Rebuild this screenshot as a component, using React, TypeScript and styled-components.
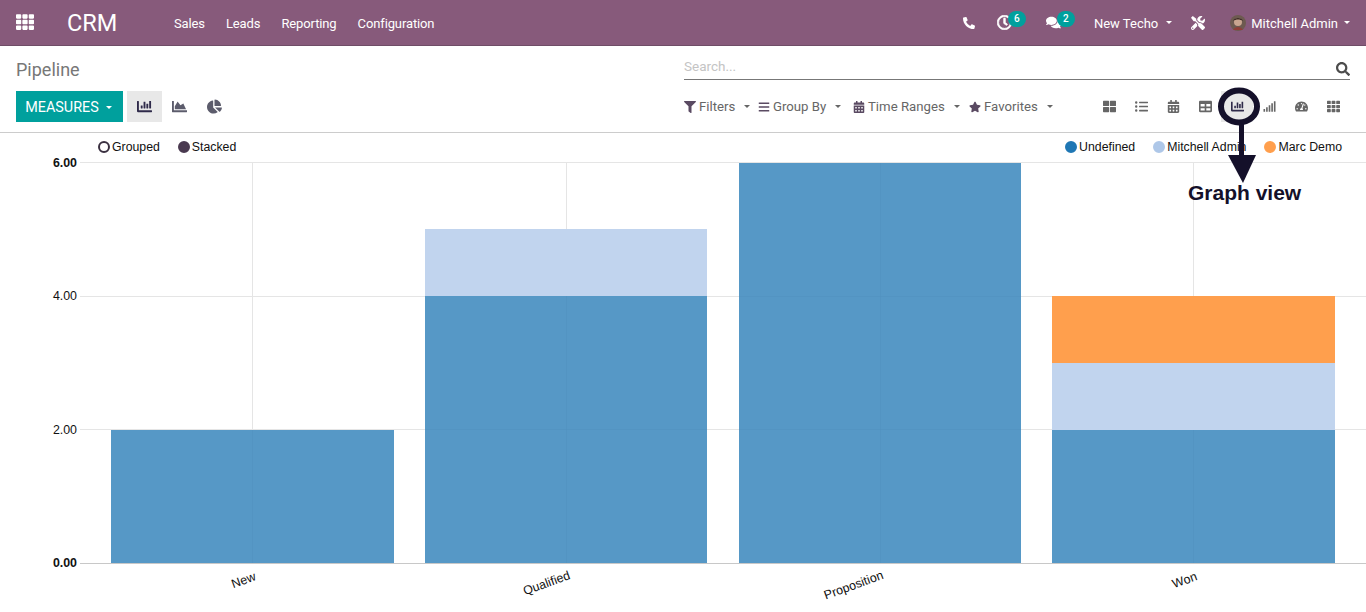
import React from "react";
import styled, { createGlobalStyle } from "styled-components";
import {
  FaTh, FaPhoneAlt, FaRegClock, FaComments, FaTools, FaSearch, FaFilter, FaBars,
  FaCalendarAlt, FaStar, FaChartBar, FaChartArea, FaChartPie, FaThLarge, FaListUl,
  FaTable, FaSignal, FaTachometerAlt,
} from "react-icons/fa";

const Global = createGlobalStyle`
  html, body { margin: 0; padding: 0; background: #fff; }
  body { font-family: Roboto, "Liberation Sans", sans-serif; }
  * { box-sizing: border-box; }
`;

const Page = styled.div`
  width: 1366px;
  height: 612px;
  overflow: hidden;
  position: relative;
  display: flex;
  flex-direction: column;
`;

const Nav = styled.header`
  height: 46px;
  flex: none;
  background: #875a7b;
  border-bottom: 1px solid #6f4d67;
  display: flex;
  align-items: center;
  color: #fff;
  font-size: 13px;
`;
const AppsIcon = styled.span`
  display: flex;
  margin-left: 16px;
  margin-top: -2px;
  font-size: 18px;
`;
const Brand = styled.span`
  margin-left: 33px;
  font-size: 23.5px;
  width: 107px;
`;
const Menu = styled.nav`
  display: flex;
  gap: 21px;
  padding-top: 1px;
  letter-spacing: -0.12px;
`;
const Spacer = styled.div`
  flex: 1;
`;
const NavTools = styled.div`
  display: flex;
  align-items: center;
  padding-right: 16px;
`;
const NavIcon = styled.span<{ $size: number; $left: number; $bold?: boolean }>`
  position: relative;
  display: flex;
  font-size: ${(p) => p.$size}px;
  margin-left: ${(p) => p.$left}px;
  svg path { stroke: ${(p) => (p.$bold ? "currentColor" : "none")}; stroke-width: ${(p) => (p.$bold ? 24 : 0)}; }
`;
const Badge = styled.span`
  position: absolute;
  left: 11px;
  top: -4px;
  width: 18px;
  height: 16px;
  border-radius: 8px;
  background: #00a09d;
  color: #fff;
  font-size: 10px;
  font-weight: 500;
  line-height: 15px;
  text-align: center;
`;
const NavText = styled.span<{ $left: number }>`
  margin-left: ${(p) => p.$left}px;
  padding-top: 1px;
  white-space: nowrap;
`;
const Caret = styled.i<{ $left: number }>`
  display: inline-block;
  flex: none;
  margin-left: ${(p) => p.$left}px;
  border-left: 3.5px solid transparent;
  border-right: 3.5px solid transparent;
  border-top: 3.5px solid currentColor;
`;

const Panel = styled.section`
  height: 87px;
  flex: none;
  border-bottom: 1px solid #ccc;
  display: grid;
  grid-template-columns: 668px 1fr;
  grid-template-rows: 45px 31px;
  padding: 0 16px;
`;
const Title = styled.h1`
  margin: 0;
  font-size: 18px;
  font-weight: 400;
  color: #777;
  line-height: 47px;
`;
const SearchBar = styled.div`
  height: 34px;
  align-self: start;
  border-bottom: 1px solid #777;
  display: flex;
  align-items: center;
  justify-content: space-between;
  font-size: 13.5px;
  color: #c4c4c4;
  padding-top: 8px;
`;
const SearchHint = styled.span`
  margin-bottom: 2px;
`;
const SearchIcon = styled.span`
  display: flex;
  color: #4c4c4c;
  font-size: 14px;
  margin-top: 5px;
`;
const LeftTools = styled.div`
  display: flex;
  align-items: stretch;
`;
const Measures = styled.button`
  width: 107px;
  border: 0;
  background: #00a09d;
  color: #fff;
  font: 400 14.4px Roboto, sans-serif;
  padding: 1px 2px 0 0;
  margin-right: 4px;
  display: flex;
  align-items: center;
  justify-content: center;
`;
const ModeButton = styled.span<{ $active?: boolean }>`
  width: 35px;
  display: flex;
  align-items: center;
  justify-content: center;
  font-size: 15px;
  color: ${(p) => (p.$active ? "#2f2a4a" : "#5c5c6c")};
  background: ${(p) => (p.$active ? "#e8e8e8" : "transparent")};
`;
const RightTools = styled.div`
  display: flex;
  align-items: center;
  justify-content: space-between;
`;
const Filters = styled.div`
  display: flex;
  align-items: center;
  color: #666;
  font-size: 13.2px;
`;
const FilterItem = styled.span<{ $width: number }>`
  display: flex;
  align-items: center;
  width: ${(p) => p.$width}px;
  gap: 3px;
  white-space: nowrap;
  svg { flex: none; color: #5a4a62; font-size: 12px; }
`;
const Views = styled.div`
  display: flex;
  align-items: stretch;
  height: 31px;
  margin-right: 1px;
`;
const ViewButton = styled.span<{ $active?: boolean }>`
  width: 32px;
  display: flex;
  align-items: center;
  justify-content: center;
  font-size: 13px;
  color: ${(p) => (p.$active ? "#2f2a4a" : "#666")};
  background: ${(p) => (p.$active ? "#e8e8e8" : "transparent")};
`;

const ChartArea = styled.main`
  flex: 1;
  min-height: 0;
  display: flex;
  flex-direction: column;
`;
const Legends = styled.div`
  height: 29px;
  flex: none;
  display: flex;
  align-items: center;
  justify-content: space-between;
  padding: 0 24px 2px 98px;
  font: 12.3px "Liberation Sans", Arial, sans-serif;
  color: #111;
`;
const LegendGroup = styled.div`
  display: flex;
  align-items: center;
  gap: 18px;
`;
const LegendItem = styled.span`
  display: flex;
  align-items: center;
  gap: 2px;
  white-space: nowrap;
`;
const Dot = styled.i<{ $fill: string; $ring?: string }>`
  width: 12px;
  height: 12px;
  flex: none;
  border-radius: 50%;
  background: ${(p) => p.$fill};
  border: 2px solid ${(p) => p.$ring ?? p.$fill};
`;
const ChartSvg = styled.svg`
  display: block;
  overflow: visible;
  font-family: "Liberation Sans", Arial, sans-serif;
`;

const CalloutMark = styled.svg`
  position: absolute;
  left: 1210px;
  top: 82px;
`;
const CalloutLabel = styled.div`
  position: absolute;
  left: 1188px;
  top: 181px;
  font: 700 21px "Liberation Sans", Arial, sans-serif;
  line-height: 24px;
  color: #14102a;
  white-space: nowrap;
`;

const BLUE = "#5698c6";
const LIGHT = "#c1d4ee";
const ORANGE = "#ff9f4d";
const y = (v: number) => 401 - v * 66.75;
const py = (v: number) => Math.round(y(v));

const stages = [
  { name: "New", x: 111, w: 283, cx: 252, lx: 245, ly: 422, parts: [[0, 2, BLUE]] },
  { name: "Qualified", x: 425, w: 282, cx: 566, lx: 548, ly: 425, parts: [[0, 4, BLUE], [4, 5, LIGHT]] },
  { name: "Proposition", x: 739, w: 282, cx: 880, lx: 855, ly: 427, parts: [[0, 6, BLUE]] },
  { name: "Won", x: 1052, w: 283, cx: 1193, lx: 1186, ly: 422, parts: [[0, 2, BLUE], [2, 3, LIGHT], [3, 4, ORANGE]] },
] as { name: string; x: number; w: number; cx: number; lx: number; ly: number; parts: [number, number, string][] }[];

const modes = [FaChartBar, FaChartArea, FaChartPie];
const views = [FaThLarge, FaListUl, FaCalendarAlt, FaTable, FaChartBar, FaSignal, FaTachometerAlt, FaTh];
const filters = [
  { Icon: FaFilter, label: "Filters", width: 74 },
  { Icon: FaBars, label: "Group By", width: 95 },
  { Icon: FaCalendarAlt, label: "Time Ranges", width: 116 },
  { Icon: FaStar, label: "Favorites", width: 96 },
];

const Avatar = () => (
  <svg width="16" height="16" viewBox="0 0 16 16">
    <circle cx="8" cy="8" r="8" fill="#6d5a50" />
    <circle cx="8" cy="7" r="4" fill="#c9a58f" />
    <path d="M3 6c1-4 9-4 10 0-3-2-7-2-10 0z" fill="#3a2a26" />
    <path d="M3 15c2-4 8-4 10 0z" fill="#8f3f38" />
  </svg>
);

export default function App() {
  return (
    <Page>
      <Global />
      <Nav>
        <AppsIcon><FaTh /></AppsIcon>
        <Brand>CRM</Brand>
        <Menu>
          <span>Sales</span>
          <span>Leads</span>
          <span>Reporting</span>
          <span>Configuration</span>
        </Menu>
        <Spacer />
        <NavTools>
          <NavIcon $size={12} $left={0}><FaPhoneAlt /></NavIcon>
          <NavIcon $size={15} $left={22} $bold><FaRegClock /><Badge>6</Badge></NavIcon>
          <NavIcon $size={15} $left={34}><FaComments /><Badge>2</Badge></NavIcon>
          <NavText $left={33}>New Techo</NavText>
          <Caret $left={8} />
          <NavIcon $size={14} $left={19}><FaTools /></NavIcon>
          <NavIcon $size={16} $left={25}><Avatar /></NavIcon>
          <NavText $left={5}>Mitchell Admin</NavText>
          <Caret $left={6} />
        </NavTools>
      </Nav>

      <Panel>
        <Title>Pipeline</Title>
        <SearchBar>
          <SearchHint>Search...</SearchHint>
          <SearchIcon><FaSearch /></SearchIcon>
        </SearchBar>
        <LeftTools>
          <Measures>MEASURES<Caret $left={7} /></Measures>
          {modes.map((Icon, i) => (
            <ModeButton key={i} $active={i === 0}><Icon /></ModeButton>
          ))}
        </LeftTools>
        <RightTools>
          <Filters>
            {filters.map(({ Icon, label, width }) => (
              <FilterItem key={label} $width={width}>
                <Icon />{label}<Caret $left={6} />
              </FilterItem>
            ))}
          </Filters>
          <Views>
            {views.map((Icon, i) => (
              <ViewButton key={i} $active={i === 4}><Icon /></ViewButton>
            ))}
          </Views>
        </RightTools>
      </Panel>

      <ChartArea>
        <Legends>
          <LegendGroup>
            <LegendItem><Dot $fill="#fff" $ring="#3a3040" />Grouped</LegendItem>
            <LegendItem><Dot $fill="#4a3a50" />Stacked</LegendItem>
          </LegendGroup>
          <LegendGroup>
            <LegendItem><Dot $fill="#1f77b4" />Undefined</LegendItem>
            <LegendItem><Dot $fill="#aec7e8" />Mitchell Admin</LegendItem>
            <LegendItem><Dot $fill="#ff9f4d" />Marc Demo</LegendItem>
          </LegendGroup>
        </Legends>
        <ChartSvg width="1366" height="450" viewBox="0 0 1366 450">
          {[6, 4, 2].map((v) => (
            <line key={v} x1="80" x2="1366" y1={Math.floor(y(v)) + 0.5} y2={Math.floor(y(v)) + 0.5} stroke="#e5e5e5" />
          ))}
          {stages.map((s) => (
            <line key={s.name} x1={s.cx + 0.5} x2={s.cx + 0.5} y1="0" y2="401" stroke="#e5e5e5" />
          ))}
          {stages.flatMap((s) =>
            s.parts.map(([from, to, fill]) => (
              <rect key={s.name + from} x={s.x} width={s.w} y={py(to)} height={py(from) - py(to)} fill={fill} />
            ))
          )}
          {stages.map((s) => (
            <line key={s.name + "-v"} x1={s.cx + 0.5} x2={s.cx + 0.5} y1={py(s.parts[0][1])} y2="401" stroke="#4f8fbd" strokeOpacity="0.5" />
          ))}
          {stages.flatMap((s) =>
            [2, 4].filter((v) => v < s.parts[0][1]).map((v) => (
              <line key={s.name + "-h" + v} x1={s.x} x2={s.x + s.w} y1={Math.floor(y(v)) + 0.5} y2={Math.floor(y(v)) + 0.5} stroke="#4f8fbd" strokeOpacity="0.5" />
            ))
          )}
          <line x1="80" x2="1366" y1="401.5" y2="401.5" stroke="#c8c8c8" />
          {[6, 4, 2, 0].map((v) => (
            <text
              key={v}
              x="77"
              y={y(v) + 4}
              textAnchor="end"
              fontSize="12.4"
              fontWeight={v === 6 || v === 0 ? 700 : 400}
              fill="#111"
            >
              {v.toFixed(2)}
            </text>
          ))}
          {stages.map((s) => (
            <text
              key={s.name}
              x={s.lx}
              y={s.ly}
              textAnchor="middle"
              fontSize="12.4"
              fill="#111"
              transform={`rotate(-20 ${s.lx} ${s.ly})`}
            >
              {s.name}
            </text>
          ))}
        </ChartSvg>
      </ChartArea>

      <CalloutMark width="56" height="104" viewBox="0 0 56 104">
        <ellipse cx="29" cy="24.5" rx="18" ry="16" fill="none" stroke="#14102a" strokeWidth="6" />
        <rect x="29" y="42" width="5" height="34" fill="#14102a" />
        <polygon points="18,73 46,73 33,101" fill="#14102a" />
      </CalloutMark>
      <CalloutLabel>Graph view</CalloutLabel>
    </Page>
  );
}
